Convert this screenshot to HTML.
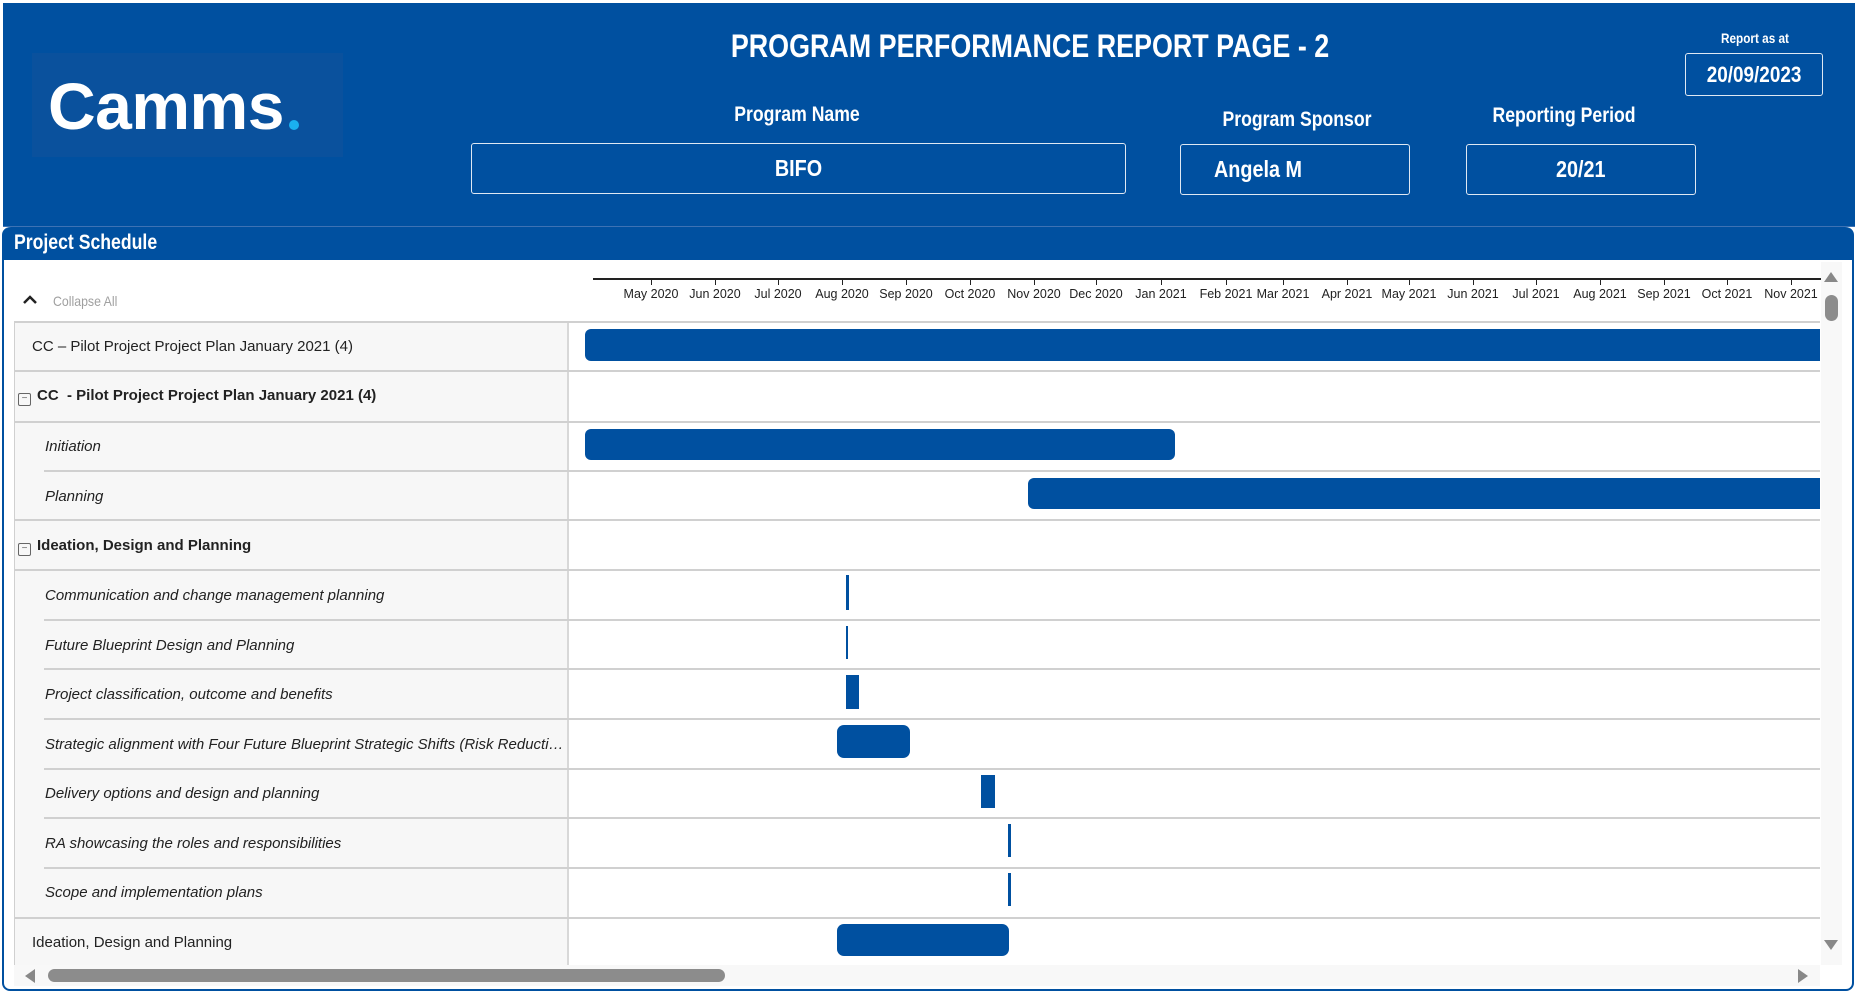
<!DOCTYPE html>
<html><head><meta charset="utf-8"><style>
*{margin:0;padding:0;box-sizing:border-box}
body{width:1857px;height:993px;background:#fff;position:relative;overflow:hidden;font-family:"Liberation Sans",Arial,sans-serif}
.a{position:absolute}
.hd{font-family:"Liberation Sans",sans-serif;font-weight:bold;color:#fff;white-space:nowrap}
.c{transform:translateX(-50%) scaleX(0.84)}
.box{position:absolute;border:1.5px solid #dfe8f3;border-radius:3px;color:#fff;font-weight:bold;display:flex;align-items:center;justify-content:center}
.box span{display:inline-block;transform:scaleX(0.86)}
.m{position:absolute;top:287px;font-size:12.5px;color:#222;transform:translateX(-50%);white-space:nowrap}
.t{position:absolute;top:279px;width:1px;height:6px;background:#222}
.row{position:absolute;left:14px;width:554px;font-size:15px;color:#222;white-space:nowrap}
.hl{position:absolute;height:2px;background:#d0d0d0}
.bar{position:absolute;background:#0050a0}
.mb{display:inline-block;width:13px;height:13px;border:1px solid #666;border-radius:2px;font-size:10px;line-height:10px;text-align:center;color:#666;vertical-align:-1px;margin-right:6px;font-weight:normal}
</style></head><body>
<div class="a" style="left:3px;top:3px;width:1852px;height:224px;background:#0050a0"></div>
<div class="a" style="left:32px;top:53px;width:311px;height:104px;background:#0a519d"></div>
<div class="a" style="left:48px;top:68px;font-size:66px;font-weight:bold;color:#fff;letter-spacing:-0.5px">Camms</div>
<div class="a" style="left:289px;top:120px;width:10px;height:10px;border-radius:50%;background:#1ab0f0"></div>
<div class="a hd c" style="left:1030px;top:28px;font-size:32px">PROGRAM PERFORMANCE REPORT PAGE - 2</div>
<div class="a hd c" style="left:1755px;top:30px;font-size:14px">Report as at</div>
<div class="box" style="left:1685px;top:53px;width:138px;height:43px;font-size:22px"><span>20/09/2023</span></div>
<div class="a hd c" style="left:797px;top:103px;font-size:21px">Program Name</div>
<div class="box" style="left:471px;top:143px;width:655px;height:51px;font-size:23px"><span>BIFO</span></div>
<div class="a hd c" style="left:1297px;top:108px;font-size:21px">Program Sponsor</div>
<div class="box" style="left:1180px;top:144px;width:230px;height:51px;font-size:23px;justify-content:flex-start;padding-left:33px"><span style="transform-origin:left">Angela M</span></div>
<div class="a hd c" style="left:1564px;top:104px;font-size:21px">Reporting Period</div>
<div class="box" style="left:1466px;top:144px;width:230px;height:51px;font-size:23px"><span>20/21</span></div>
<div class="a" style="left:3px;top:226px;width:1852px;height:1px;background:#3d72b4"></div>
<div class="a" style="left:2px;top:227px;width:1852px;height:764px;border:2px solid #0050a0;border-top:none;border-radius:8px;background:#fff"></div>
<div class="a" style="left:3px;top:227px;width:1850px;height:33px;background:#0050a0;border-radius:8px 8px 0 0"></div>
<div class="a hd" style="left:14px;top:231px;font-size:21px;transform:scaleX(0.84);transform-origin:left">Project Schedule</div>
<div class="a" style="left:14px;top:322px;width:554px;height:643px;background:#f7f7f7;border-left:1px solid #d0d0d0"></div>
<div class="a" style="left:567px;top:322px;width:2px;height:643px;background:#d8d8d8"></div>
<svg class="a" style="left:22px;top:294px" width="16" height="12"><path d="M2 9 L8 3 L14 9" fill="none" stroke="#222" stroke-width="2.5"/></svg>
<div class="a" style="left:53px;top:293px;font-size:14px;color:#a0a0a0;transform:scaleX(0.88);transform-origin:left">Collapse All</div>
<div class="a" style="left:593px;top:278px;width:1228px;height:2px;background:#222"></div>
<div class="t" style="left:651px"></div><div class="m" style="left:651px">May 2020</div>
<div class="t" style="left:715px"></div><div class="m" style="left:715px">Jun 2020</div>
<div class="t" style="left:778px"></div><div class="m" style="left:778px">Jul 2020</div>
<div class="t" style="left:842px"></div><div class="m" style="left:842px">Aug 2020</div>
<div class="t" style="left:906px"></div><div class="m" style="left:906px">Sep 2020</div>
<div class="t" style="left:970px"></div><div class="m" style="left:970px">Oct 2020</div>
<div class="t" style="left:1034px"></div><div class="m" style="left:1034px">Nov 2020</div>
<div class="t" style="left:1096px"></div><div class="m" style="left:1096px">Dec 2020</div>
<div class="t" style="left:1161px"></div><div class="m" style="left:1161px">Jan 2021</div>
<div class="t" style="left:1226px"></div><div class="m" style="left:1226px">Feb 2021</div>
<div class="t" style="left:1283px"></div><div class="m" style="left:1283px">Mar 2021</div>
<div class="t" style="left:1347px"></div><div class="m" style="left:1347px">Apr 2021</div>
<div class="t" style="left:1409px"></div><div class="m" style="left:1409px">May 2021</div>
<div class="t" style="left:1473px"></div><div class="m" style="left:1473px">Jun 2021</div>
<div class="t" style="left:1536px"></div><div class="m" style="left:1536px">Jul 2021</div>
<div class="t" style="left:1600px"></div><div class="m" style="left:1600px">Aug 2021</div>
<div class="t" style="left:1664px"></div><div class="m" style="left:1664px">Sep 2021</div>
<div class="t" style="left:1727px"></div><div class="m" style="left:1727px">Oct 2021</div>
<div class="t" style="left:1791px"></div><div class="m" style="left:1791px">Nov 2021</div>
<div class="hl" style="left:14px;top:321px;width:1806px"></div>
<div class="hl" style="left:14px;top:370px;width:1806px"></div>
<div class="hl" style="left:14px;top:421px;width:1806px"></div>
<div class="hl" style="left:44px;top:470px;width:1776px"></div>
<div class="hl" style="left:14px;top:519px;width:1806px"></div>
<div class="hl" style="left:14px;top:569px;width:1806px"></div>
<div class="hl" style="left:44px;top:619px;width:1776px"></div>
<div class="hl" style="left:44px;top:668px;width:1776px"></div>
<div class="hl" style="left:44px;top:718px;width:1776px"></div>
<div class="hl" style="left:44px;top:768px;width:1776px"></div>
<div class="hl" style="left:44px;top:817px;width:1776px"></div>
<div class="hl" style="left:44px;top:867px;width:1776px"></div>
<div class="hl" style="left:14px;top:917px;width:1806px"></div>
<div class="row" style="top:338px;left:32px">CC – Pilot Project Project Plan January 2021 (4)</div>
<div class="row" style="top:387px;left:18px;font-weight:bold"><span class="mb">−</span>CC&nbsp; - Pilot Project Project Plan January 2021 (4)</div>
<div class="row" style="top:438px;left:45px;font-style:italic">Initiation</div>
<div class="row" style="top:488px;left:45px;font-style:italic">Planning</div>
<div class="row" style="top:537px;left:18px;font-weight:bold"><span class="mb">−</span>Ideation, Design and Planning</div>
<div class="row" style="top:587px;left:45px;font-style:italic">Communication and change management planning</div>
<div class="row" style="top:637px;left:45px;font-style:italic">Future Blueprint Design and Planning</div>
<div class="row" style="top:686px;left:45px;font-style:italic">Project classification, outcome and benefits</div>
<div class="row" style="top:736px;left:45px;font-style:italic;width:522px;overflow:hidden;text-overflow:ellipsis">Strategic alignment with Four Future Blueprint Strategic Shifts (Risk Reduction)</div>
<div class="row" style="top:785px;left:45px;font-style:italic">Delivery options and design and planning</div>
<div class="row" style="top:835px;left:45px;font-style:italic">RA showcasing the roles and responsibilities</div>
<div class="row" style="top:884px;left:45px;font-style:italic">Scope and implementation plans</div>
<div class="row" style="top:934px;left:32px">Ideation, Design and Planning</div>
<div class="bar" style="left:585px;top:329px;width:1235px;height:32px;border-radius:6px 0 0 6px"></div>
<div class="bar" style="left:585px;top:429px;width:590px;height:31px;border-radius:6px"></div>
<div class="bar" style="left:1028px;top:478px;width:792px;height:31px;border-radius:6px 0 0 6px"></div>
<div class="bar" style="left:846px;top:575px;width:3px;height:35px"></div>
<div class="bar" style="left:846px;top:626px;width:2px;height:33px"></div>
<div class="bar" style="left:846px;top:675px;width:13px;height:34px"></div>
<div class="bar" style="left:837px;top:725px;width:73px;height:33px;border-radius:7px"></div>
<div class="bar" style="left:981px;top:775px;width:14px;height:33px"></div>
<div class="bar" style="left:1008px;top:824px;width:3px;height:33px"></div>
<div class="bar" style="left:1008px;top:873px;width:3px;height:33px"></div>
<div class="bar" style="left:837px;top:924px;width:172px;height:32px;border-radius:7px"></div>
<div class="a" style="left:1821px;top:262px;width:21px;height:703px;background:#f8f8f8"></div>
<div class="a" style="left:1824px;top:272px;width:0;height:0;border-left:7px solid transparent;border-right:7px solid transparent;border-bottom:10px solid #888"></div>
<div class="a" style="left:1825px;top:295px;width:13px;height:26px;border-radius:7px;background:#8c8c8c"></div>
<div class="a" style="left:1824px;top:940px;width:0;height:0;border-left:7px solid transparent;border-right:7px solid transparent;border-top:10px solid #888"></div>
<div class="a" style="left:14px;top:965px;width:1806px;height:21px;background:#f8f8f8"></div>
<div class="a" style="left:25px;top:969px;width:0;height:0;border-top:7px solid transparent;border-bottom:7px solid transparent;border-right:10px solid #888"></div>
<div class="a" style="left:48px;top:969px;width:677px;height:13px;border-radius:7px;background:#8c8c8c"></div>
<div class="a" style="left:1798px;top:969px;width:0;height:0;border-top:7px solid transparent;border-bottom:7px solid transparent;border-left:10px solid #888"></div>
</body></html>
